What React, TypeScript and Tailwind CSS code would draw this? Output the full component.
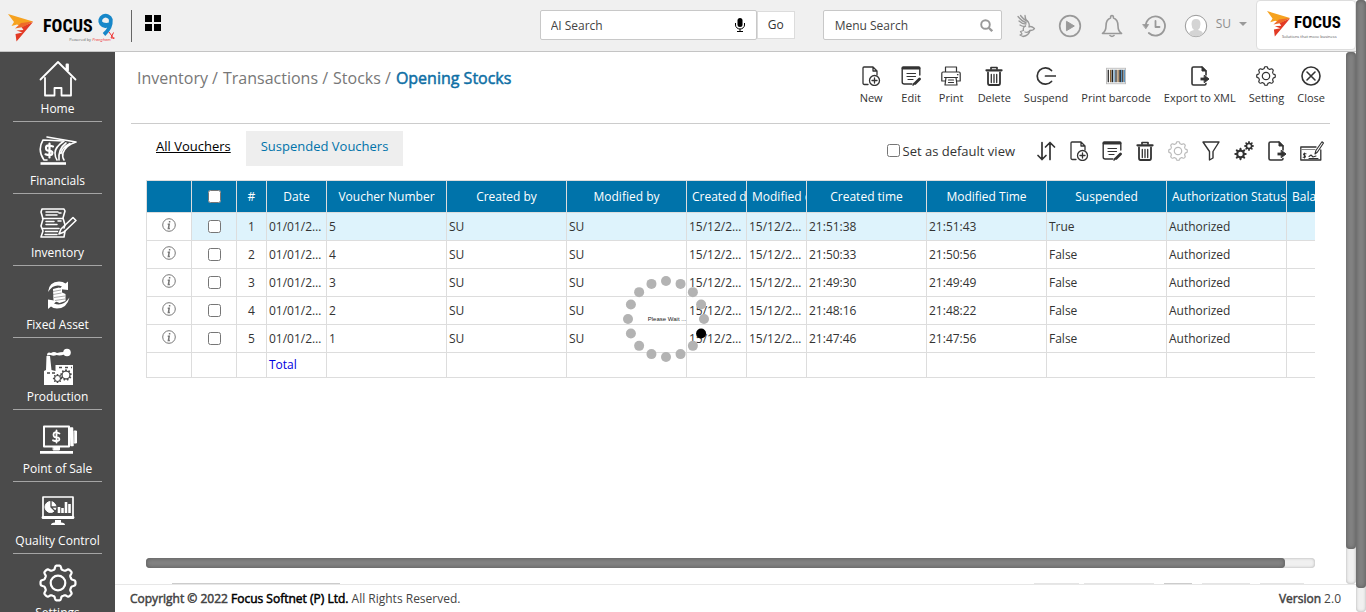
import React from "react";

type IconProps = { className?: string };

const stroke = {
  fill: "none",
  stroke: "currentColor",
  strokeLinecap: "round" as const,
  strokeLinejoin: "round" as const,
};

const gearPath = (cx: number, cy: number, outer: number, inner: number, teeth: number) => {
  const middle = (outer + inner) / 2;
  const depth = (outer - inner) / 2;
  const count = teeth * 16;
  const points = Array.from({ length: count }, (_, i) => {
    const angle = (i / count) * Math.PI * 2 - Math.PI / 2;
    const radius = middle + depth * Math.tanh(2.4 * Math.cos((i / 16) * Math.PI * 2));
    return `${(cx + Math.cos(angle) * radius).toFixed(2)} ${(cy + Math.sin(angle) * radius).toFixed(2)}`;
  });
  return `M${points.join("L")}Z`;
};

/* ---------- toolbar icons, 20 x 20 ---------- */

const NewIcon = ({ className = "size-5" }: IconProps) => (
  <svg viewBox="0 0 20 20" className={className} {...stroke} strokeWidth="1.300">
    <path d="M7 18.500H3.500Q2 18.500 2 17V2Q2 1 3 1h9l4 4v4M12 1v4h4" />
    <circle cx="13.500" cy="14.500" r="5" />
    <path d="M13.500 12v5M11 14.500h5" />
  </svg>
);

const EditIcon = ({ className = "size-5" }: IconProps) => (
  <svg viewBox="0 0 20 20" className={className} {...stroke} strokeWidth="1.400">
    <path d="M18.800 9V2q0-1-1-1H2.200q-1 0-1 1v14q0 2 2 2H11" />
    <path d="M2 2.300h16" strokeWidth="2.400" />
    <path d="M6 7.500h8.500M6 10.500h8.500M7 13.500h5" strokeWidth="1.200" />
    <path d="M14 17.500l4.500-4.500" strokeWidth="2.800" />
    <path d="M12 19.200l.8-1.600" />
  </svg>
);

const PrintIcon = ({ className = "size-5" }: IconProps) => (
  <svg viewBox="0 0 20 20" className={className} {...stroke} strokeWidth="1.200">
    <path d="M4.500 6V1h11v5M4 15H.8V7.500Q.8 6 2 6h16q1.200 0 1.200 1.500V15H16" />
    <path d="M5 11.500h10l1 7.500H4zM3.500 11.500h13M7.500 14h5M7.500 16.500h5M16.500 8.700h.5" />
  </svg>
);

const DeleteIcon = ({ className = "size-5" }: IconProps) => (
  <svg viewBox="0 0 20 20" className={className} {...stroke} strokeWidth="1.300">
    <path d="M2.500 4.300h15" strokeWidth="2.300" />
    <path d="M7 3V1.500h6V3" strokeWidth="1.700" />
    <path d="M4 6.500V17q0 2 1.500 2h9q1.500 0 1.500-2V6.500" strokeWidth="1.800" />
    <path d="M7.300 8.500v8M10 8.500v8M12.700 8.500v8" />
  </svg>
);

const SuspendIcon = ({ className = "size-5" }: IconProps) => (
  <svg viewBox="0 0 20 20" className={className} {...stroke} strokeWidth="1.700">
    <path d="M15.500 4.500A8.200 8.200 0 1 0 15.500 15.500M9.500 10h10" />
  </svg>
);

const BarcodeIcon = ({ className = "size-5" }: IconProps) => (
  <svg viewBox="0 0 22 20" className={className} fill="none">
    <rect x=".5" y="1.500" width="21" height="17" stroke="#bbb" />
    <path d="M2.500 3v14M11 3v14M18.500 3v14" stroke="#333" strokeWidth="1.500" />
    <path d="M5 3v14M13.300 3v14" stroke="#8b6333" strokeWidth="1.300" />
    <path d="M7 3v14M15.500 3v14" stroke="#222" strokeWidth="1.800" />
    <path d="M9 3v14M17 3v14M20.300 3v14" stroke="#5590bd" strokeWidth="1.100" />
  </svg>
);

const ExportIcon = ({ className = "size-5" }: IconProps) => (
  <svg viewBox="0 0 20 20" className={className} {...stroke} strokeWidth="1.600">
    <path d="M16 9V5l-4-4H3.500Q2 1 2 2.500v15Q2 19 3.500 19h11q1.500 0 1.500-1.500" />
    <path d="M12 1v4h4z" fill="currentColor" strokeWidth="1" />
    <path d="M10.500 13H15" strokeWidth="2.800" strokeLinecap="butt" />
    <path d="M14.500 9.500L19 13l-4.500 3.500z" strokeWidth="1" fill="currentColor" />
  </svg>
);

const SettingIcon = ({ className = "size-5" }: IconProps) => (
  <svg viewBox="0 0 20 20" className={className} {...stroke} strokeWidth="1.200">
    <path d={gearPath(10, 10, 9.3, 7.5, 8)} />
    <circle cx="10" cy="10" r="3.700" />
  </svg>
);

const CloseIcon = ({ className = "size-5" }: IconProps) => (
  <svg viewBox="0 0 20 20" className={className} {...stroke} strokeWidth="1.600">
    <circle cx="10" cy="10" r="9" />
    <path d="M6 6l8 8M14 6l-8 8" />
  </svg>
);

const SortIcon = ({ className = "size-5" }: IconProps) => (
  <svg viewBox="0 0 20 20" className={className} {...stroke} strokeWidth="1.700">
    <path d="M6 1.500v17M2 14.500l4 4 4-4M14 18.500v-17M9.500 6L14 1.500 18.500 6" />
  </svg>
);

const FilterIcon = ({ className = "size-5" }: IconProps) => (
  <svg viewBox="0 0 20 20" className={className} {...stroke} strokeWidth="1.400">
    <path d="M2 1h16l-6 9.500V17l-3.500 2v-8.500z" />
  </svg>
);

const GearsIcon = ({ className = "size-5" }: IconProps) => (
  <svg viewBox="0 0 20 20" className={className} {...stroke}>
    <path d={gearPath(6.5, 13, 6.2, 4.3, 8)} fill="currentColor" stroke="none" />
    <path d={gearPath(15, 5, 4.9, 3.4, 8)} fill="currentColor" stroke="none" />
    <circle cx="6.500" cy="13" r="2.300" fill="white" stroke="none" />
    <circle cx="15" cy="5" r="1.800" fill="white" stroke="none" />
  </svg>
);

const ChequeIcon = ({ className = "h-5 w-6" }: IconProps) => (
  <svg viewBox="0 0 24 20" className={className} {...stroke} strokeWidth="1.300">
    <path d="M16 6H.8v13h20V9" />
    <path d="M1 8.500h14" strokeWidth="1" stroke="#888" />
    <path d="M4.500 12v5M6 12.700H4q-1 1 .5 1.700t.5 1.900H3.200M9 15.500l2-1.500 2 2 3-1M9 17.500h9M15 13l.9-3.500L22 .8l1.500 1.200L17.500 11z" strokeWidth="1.100" />
  </svg>
);

/* ---------- sidebar icons, 40 x 40 ---------- */

const HomeArt = () => (
  <svg viewBox="0 0 40 40" className="size-10" {...stroke} strokeWidth="1.800">
    <path d="M2.500 20.500L20 3 37.500 20.500M28.500 10V5.500h1.500v6M7 19v17.500h9.500V29h7v7.500H33V19" />
  </svg>
);

const FinanceArt = () => (
  <svg viewBox="0 0 40 40" className="size-10" {...stroke} strokeWidth="1.600">
    <path d="M26 10L5 9Q-1 19 6 29h3M26 10q-9 6-9 12 0 4 2 7" />
    <path d="M9 6l29 5Q28 14 25 22q-1 4 1 7M28 12q-8 6-7 17M32 12.500q-8 4-9 10" />
    <path d="M11.500 12.500v14M15 15.500q-7-2.500-7 1.200t3.500 2.800q4 1 2.500 3.800-2 1.700-6.500 0" strokeWidth="2.200" />
    <path d="M2.500 32.500H28" strokeWidth="2.600" strokeLinecap="butt" />
  </svg>
);

const InventoryArt = () => (
  <svg viewBox="0 0 40 40" className="size-10" {...stroke} strokeWidth="1.600">
    <path d="M4 6h22l1 2-2 7 2 7-1 3M4 6l-1 3 2 7-2 7 2 5-2 6h23l1-6M4.500 15.500H25M4 25.500h17" />
    <path d="M8 9h12M8 12h11M8 18.500h8M8 21.500h11M7.500 28.500h12M7 31.500h12M20 18h3M21 10h2" strokeWidth="1.500" />
    <path d="M21 31l2-5 12-11.500 3 3L26 29z" />
  </svg>
);

const AssetArt = () => (
  <svg viewBox="0 0 40 40" className="size-10" fill="currentColor">
    <path d="M10 17Q11 6.500 21 6.500q4 0 6.500 2l2.500-2v8.500l-9-1 3-2.500Q16 8 10 17z" />
    <path d="M31.500 22.500Q29 33.500 19 33.500q-4 0-6-2L10 34v-9.500l9 1.500-3 2.500Q25 32 31.500 22.500z" />
    <path d="M15 14l6-1.500 3 1.500v3.500l3.500 1.500v7l-6 2-6-2.500z" />
    <path d="M15 16.500l8-1.500M15 19.500l8.500-1.500M16 22.500l11-1.500M17 25.500l10-1.500" stroke="#888" strokeWidth=".7" />
  </svg>
);

const ProductionArt = () => (
  <svg viewBox="0 0 40 40" className="size-10" fill="currentColor">
    <path d="M8.500 9H12l1.500 14 4 1v-6H35v20H6V24l2-1z" />
    <circle cx="29" cy="5.500" r="3.800" />
    <path d="M9 8.500q0-4 4-2.500 3-2 6 0 3-1 7-1v2.500q-4 1.500-7.500.500-3 1.500-6 0z" />
    <path d="M21 20.500h3M27 20.500h3M33 20.500h1M9 26h3M14 26h3" stroke="#4b4b4b" strokeWidth="1.300" />
    <path d={gearPath(28, 28, 5.800, 4.400, 9)} fill="#4b4b4b" />
    <circle cx="28" cy="28" r="3.300" />
    <path d={gearPath(19.5, 31.5, 4.6, 3.4, 8)} fill="#4b4b4b" />
    <circle cx="19.500" cy="31.500" r="2.400" />
  </svg>
);

const SaleArt = () => (
  <svg viewBox="0 0 40 40" className="size-10" {...stroke}>
    <path d="M6 7.500h25v20H6z" strokeWidth="2" />
    <path d="M32.500 9h2l.5 17.500h-2z" fill="currentColor" strokeWidth="1.500" />
    <path d="M36.500 12h2v12h-2z" fill="currentColor" strokeWidth="1" />
    <path d="M15.500 28h6v3h-6z" fill="currentColor" />
    <path d="M2 33.300h33" strokeWidth="2.800" strokeLinecap="butt" />
    <path d="M18.500 11.500v12M21.500 14.500q-6-2.500-6 1t3 2.400q4 1 2.500 3.400-2 1.700-6 0" strokeWidth="1.800" />
  </svg>
);

const QualityArt = () => (
  <svg viewBox="0 0 40 40" className="size-10" {...stroke}>
    <path d="M5 6h30v21H5z" strokeWidth="1.700" />
    <path d="M5 26.500h30" strokeWidth="2.800" />
    <path d="M17 29h6v2.500q4 0 4 2.500H13q0-2.500 4-2.500z" fill="currentColor" stroke="none" />
    <circle cx="12.500" cy="16" r="5.500" fill="currentColor" />
    <path d="M13 16h6M13 16l4 4M13 16V9" stroke="#4b4b4b" strokeWidth="1.300" />
    <path d="M21 22v-6M24.500 22v-5M28 22V11M31.500 22v-9" strokeWidth="2.600" strokeLinecap="butt" />
  </svg>
);

const GearArt = () => (
  <svg viewBox="0 0 40 40" className="size-10" {...stroke} strokeWidth="2.200">
    <path d={gearPath(20, 20, 17.5, 13.8, 8)} />
    <circle cx="20" cy="20" r="7.300" />
  </svg>
);

/* ---------- header drawings ---------- */

const FocusMark = ({ className }: IconProps) => (
  <svg viewBox="0 0 25 28" className={className}>
    <path d="M0 0l25 7.500L15 13 9 10.500 3.500 12 6 8z" fill="#f6a21f" />
    <path d="M25 8L8.500 27.500 7.500 20l7-1.500-6-2 7-.5-2-3z" fill="#e23a25" />
    <path d="M25 7.500L13 9l-6 5.500 8-1.500z" fill="#ee6b2a" />
  </svg>
);

const NineMark = () => (
  <svg viewBox="0 0 18 28" className="h-7 w-[18px]" fill="none">
    <path d="M12.500 12.500A5.400 5.200 0 1 1 13.800 7.500Q14.500 16 7 22.500" stroke="#1787c9" strokeWidth="3.800" />
    <path d="M3.500 10q4 3 9 1.500" stroke="#1787c9" strokeWidth="2" />
    <path d="M12 20l5 7M16.500 20.500L14 26h3.500" stroke="#e33" strokeWidth="1" />
  </svg>
);

const EagleIcon = () => (
  <svg viewBox="0 0 20 24" className="h-6 w-5" {...stroke} stroke="#999" strokeWidth="1.300">
    <path d="M2 2.500q4 5 8 6M4.500 1.500Q8 6 11 7M9 1.500q0 4 3 6M3 7q3 3 7 3M4 11q3 2 5.500 1" />
    <path d="M11 7q3 2 2 6 2-1.500 5.500 1.500-1 2-4.500 2-1 5-7 6l-3-1.500 2-1-1.500-2.500 3-1q-1-3 2-4.500" />
    <path d="M9 18q3 1 5-1.500" />
  </svg>
);

const PlayIcon = () => (
  <svg viewBox="0 0 24 24" className="size-6" {...stroke} stroke="#999" strokeWidth="1.700">
    <circle cx="12" cy="12" r="10.300" />
    <path d="M8.800 7.500l7.500 4.500-7.500 4.500z" fill="#999" strokeWidth="1" />
  </svg>
);

const BellIcon = () => (
  <svg viewBox="0 0 24 24" className="size-6" {...stroke} stroke="#999" strokeWidth="1.600">
    <path d="M2.500 19.500Q6 17 6 12 6 5.500 10.500 4q0-2.500 1.500-2.500T13.500 4Q18 5.500 18 12q0 5 3.500 7.500zM10 21.500q2 1.800 4 0" />
  </svg>
);

const HistoryIcon = () => (
  <svg viewBox="0 0 24 24" className="size-6" {...stroke} stroke="#999" strokeWidth="1.800">
    <path d="M3.800 12.500a9.600 9.600 0 1 1 3 6.500M13.500 7v6h4" />
    <path d="M1 10.500h5.600L4 14.500z" fill="#999" strokeWidth=".8" />
  </svg>
);

const AvatarIcon = () => (
  <svg viewBox="0 0 24 24" className="size-6">
    <circle cx="12" cy="12" r="10.700" fill="#fff" stroke="#999" />
    <path d="M5 20q0-3 5-4-2.500-2-2.500-6 0-5 4.500-5t4.500 5q0 4-2.500 6 5 1 5 4-7 5-14 0z" fill="#d4d4d4" />
  </svg>
);

const AppsIcon = () => (
  <svg viewBox="0 0 16 16" className="size-4">
    <path d="M0 0h7v7H0zM9 0h7v7H9zM0 9h7v7H0zM9 9h7v7H9z" />
  </svg>
);

const MicIcon = () => (
  <svg viewBox="0 0 12 16" className="h-4 w-3">
    <rect x="3.500" y="1" width="5" height="9" rx="2.500" />
    <path d="M1.500 6v2a4.500 4 0 0 0 9 0V6M6 12v2.500M3 14.500h6" fill="none" stroke="#000" strokeWidth="1" />
  </svg>
);

const MagnifierIcon = () => (
  <svg viewBox="0 0 13 13" className="size-[13px]" fill="none" stroke="#999">
    <circle cx="5.500" cy="5.500" r="4.300" strokeWidth="1.900" />
    <path d="M8.700 8.700l3.500 3.500" strokeWidth="2.300" />
  </svg>
);

/* ---------- data ---------- */

const modules = [
  { name: "Home", Art: HomeArt },
  { name: "Financials", Art: FinanceArt },
  { name: "Inventory", Art: InventoryArt },
  { name: "Fixed Asset", Art: AssetArt },
  { name: "Production", Art: ProductionArt },
  { name: "Point of Sale", Art: SaleArt },
  { name: "Quality Control", Art: QualityArt },
  { name: "Settings", Art: GearArt },
];

const actions = [
  { name: "New", Icon: NewIcon },
  { name: "Edit", Icon: EditIcon },
  { name: "Print", Icon: PrintIcon },
  { name: "Delete", Icon: DeleteIcon },
  { name: "Suspend", Icon: SuspendIcon },
  { name: "Print barcode", Icon: BarcodeIcon },
  { name: "Export to XML", Icon: ExportIcon },
  { name: "Setting", Icon: SettingIcon },
  { name: "Close", Icon: CloseIcon },
];

const viewTools = [
  { name: "Sort", Icon: SortIcon, tone: "text-[#333]" },
  { name: "Add view", Icon: NewIcon, tone: "text-[#333]" },
  { name: "Edit view", Icon: EditIcon, tone: "text-[#333]" },
  { name: "Delete view", Icon: DeleteIcon, tone: "text-[#333]" },
  { name: "View setting", Icon: SettingIcon, tone: "text-[#bbb]" },
  { name: "Filter", Icon: FilterIcon, tone: "text-[#333]" },
  { name: "Customize", Icon: GearsIcon, tone: "text-[#333]" },
  { name: "Export", Icon: ExportIcon, tone: "text-[#333]" },
  { name: "Cheque", Icon: ChequeIcon, tone: "text-[#333]" },
];

const columns = [
  { title: "Date", width: "w-[60px]" },
  { title: "Voucher Number", width: "w-[120px]" },
  { title: "Created by", width: "w-[120px]" },
  { title: "Modified by", width: "w-[120px]" },
  { title: "Created date", width: "w-[60px]" },
  { title: "Modified date", width: "w-[60px]" },
  { title: "Created time", width: "w-[120px]" },
  { title: "Modified Time", width: "w-[120px]" },
  { title: "Suspended", width: "w-[120px]" },
  { title: "Authorization Status", width: "w-[120px]" },
  { title: "Balance Amount", width: "w-[60px]" },
];

const rows = [
  ["5", "21:51:38", "21:51:43", "True"],
  ["4", "21:50:33", "21:50:56", "False"],
  ["3", "21:49:30", "21:49:49", "False"],
  ["2", "21:48:16", "21:48:22", "False"],
  ["1", "21:47:46", "21:47:56", "False"],
].map(([voucher, created, modified, suspended]) => [
  "01/01/2022",
  voucher,
  "SU",
  "SU",
  "15/12/2022",
  "15/12/2022",
  created,
  modified,
  suspended,
  "Authorized",
  "",
]);

/* ---------- sections ---------- */

const brandFont = "font-['Roboto_Condensed','Liberation_Sans_Narrow','Roboto',sans-serif] font-bold text-black";
const heavy = "font-normal [-webkit-text-stroke:0.5px_currentColor]";

function Header() {
  return (
    <header className="flex h-[52px] shrink-0 items-start border-b border-[#c4c4c4] bg-[#f0f0f0]">
      <div className="mr-auto flex items-start pl-2">
        <FocusMark className="mt-3.5 h-7 w-[25px]" />
        <div className="relative ml-2.5 mt-3 flex items-start gap-1">
          <span className={`${brandFont} text-[18px] leading-7`}>FOCUS</span>
          <NineMark />
          <span className="absolute right-1 top-[26px] whitespace-nowrap text-[4px] leading-[4px] text-[#666]">
            Powered by <i className="text-[#e33]">Prangham</i>
          </span>
        </div>
        <div className="ml-4 mt-2.5 h-8 w-px bg-[#666]" />
        <button aria-label="Apps" className="ml-[13px] mt-[15px]">
          <AppsIcon />
        </button>
      </div>

      <form className="mt-2.5 flex items-center" onSubmit={(e) => e.preventDefault()}>
        <div className="flex h-[30px] w-[217px] items-center rounded-xs border border-[#c8c8c8] bg-white pl-2.5 pr-2.5">
          <input
            aria-label="AI Search"
            placeholder="AI Search"
            className="min-w-0 flex-1 bg-transparent pt-0.5 text-[12px] text-[#444] outline-none placeholder:text-[#444]"
          />
          <MicIcon />
        </div>
        <button className="h-7 w-[38px] border border-[#dcdcdc] bg-white text-[12px] text-[#333]">Go</button>
      </form>

      <div className="ml-7 mt-2.5 flex h-[30px] w-[179px] items-center rounded-xs border border-[#c8c8c8] bg-white pl-[11px] pr-2">
        <input
          aria-label="Menu Search"
          placeholder="Menu Search"
          className="min-w-0 flex-1 bg-transparent pt-0.5 text-[12px] text-[#444] outline-none placeholder:text-[#444]"
        />
        <MagnifierIcon />
      </div>

      <div className="ml-3.5 mt-3.5 flex items-start gap-[18px]">
        <button aria-label="Assistant" className="mr-1"><EagleIcon /></button>
        <button aria-label="Play"><PlayIcon /></button>
        <button aria-label="Notifications"><BellIcon /></button>
        <button aria-label="History"><HistoryIcon /></button>
        <button className="flex items-start text-[12px] leading-5 text-[#8d8d8d]">
          <AvatarIcon />
          <span className="ml-2">SU</span>
          <svg viewBox="0 0 8 4" className="ml-2 mt-2 h-1 w-2" fill="#999">
            <path d="M0 0h8L4 4z" />
          </svg>
        </button>
      </div>

      <div className="ml-[9px] flex h-[50px] w-[100px] rounded-sm border border-[#ddd] bg-white pl-2.5">
        <FocusMark className="mt-2.5 h-[26px] w-[23px]" />
        <div className="mt-2 pl-1">
          <div className={`${brandFont} text-[17px] leading-[26px]`}>FOCUS</div>
          <div className="-ml-3 whitespace-nowrap text-[4px] leading-[4px] text-[#555]">Solutions that move business</div>
        </div>
      </div>
    </header>
  );
}

function Sidebar() {
  return (
    <nav className="flex w-[115px] shrink-0 flex-col gap-[9px] overflow-hidden bg-[#4b4b4b] px-[13px] pt-[7px]">
      {modules.map(({ name, Art }) => (
        <a
          key={name}
          href="#"
          className="flex shrink-0 flex-col items-center whitespace-nowrap border-b border-[#a5a5a5] pb-0.5 text-[12px] leading-5 text-white"
        >
          <Art />
          {name}
        </a>
      ))}
    </nav>
  );
}

function VoucherTable() {
  const cell = "overflow-hidden text-ellipsis whitespace-nowrap border border-[#ddd] px-0.5";
  return (
    <div className="overflow-hidden">
      <table className="w-[1200px] table-fixed border-collapse text-[12px] text-[#333]">
        <thead>
          <tr className="h-8 bg-[#0073aa] text-white">
            <th className="w-[45px] border border-[#ddd]" aria-label="Information" />
            <th className="w-[45px] border border-[#ddd]">
              <input type="checkbox" aria-label="Select all" className="mx-auto block size-[13px]" />
            </th>
            <th className="w-[30px] border border-[#ddd] font-normal">#</th>
            {columns.map((c) => (
              <th
                key={c.title}
                className={`${c.width} overflow-hidden whitespace-nowrap border border-[#ddd] px-[5px] font-normal`}
              >
                {c.title}
              </th>
            ))}
          </tr>
        </thead>
        <tbody>
          {rows.map((row, r) => (
            <tr key={r} className={r === 0 ? "h-7 bg-[#def3fc]" : "h-7"}>
              <td className={`${cell} bg-white`}>
                <button aria-label="Voucher information" className="mx-auto mb-1 block">
                  <svg viewBox="0 0 14 14" className="size-3.5" fill="none" stroke="#777">
                    <circle cx="7" cy="7" r="6.300" />
                    <path d="M7.600 3v1.500M5.700 6.200h1.500l-.8 4.300h1.500" strokeWidth="1.500" />
                  </svg>
                </button>
              </td>
              <td className={cell}>
                <input type="checkbox" aria-label={`Select voucher ${row[1]}`} className="mx-auto block size-[13px]" />
              </td>
              <td className={`${cell} text-center`}>{r + 1}</td>
              {row.map((value, i) => (
                <td key={i} className={cell}>{value}</td>
              ))}
            </tr>
          ))}
          <tr className="h-[25px]">
            <td className={cell} />
            <td className={cell} />
            <td className={cell} />
            <td className={`${cell} text-[#0000e0]`}>Total</td>
            {columns.slice(1).map((c) => (
              <td key={c.title} className={cell} />
            ))}
          </tr>
        </tbody>
      </table>
    </div>
  );
}

function Spinner() {
  return (
    <svg
      viewBox="0 0 90 90"
      role="status"
      className="absolute left-[calc(50%-110px)] top-[222px] size-[90px]"
    >
      {Array.from({ length: 16 }, (_, i) => {
        const angle = (i * Math.PI) / 8;
        return (
          <circle
            key={i}
            cx={45 + 38 * Math.cos(angle)}
            cy={45 + 38 * Math.sin(angle)}
            r="5"
            fill={i === 1 ? "#000" : "#b3b3b3"}
          />
        );
      })}
      <text x="46" y="47" textAnchor="middle" className="font-['Liberation_Sans',sans-serif] text-[6px]" fill="#222">
        Please Wait ...
      </text>
    </svg>
  );
}

const trackStyle = "bg-[#f0f0f0] shadow-[inset_0_0_3px_#aaa] rounded-sm";
const thumbStyle = "bg-[#828282] shadow-[inset_0_0_4px_#555] rounded-sm";

function Content() {
  return (
    <main className="relative flex min-h-0 min-w-0 flex-1 flex-col overflow-hidden">
      <div className="mx-4 flex h-[72px] shrink-0 items-start justify-between border-b border-[#ccc] pl-[6px] pr-[5px] pt-3">
        <div className="mt-0.5 flex gap-[5px] whitespace-nowrap text-[16px] leading-6 text-[#777]">
          <a href="#">Inventory /</a>
          <a href="#">Transactions /</a>
          <a href="#">Stocks /</a>
          <a href="#" className={`${heavy} text-[#0e6fa5]`}>Opening Stocks</a>
        </div>
        <div className="flex gap-[13px] text-[11px] leading-4 text-[#333]">
          {actions.map(({ name, Icon }) => (
            <button key={name} className="flex min-w-[27px] flex-col items-center gap-1 whitespace-nowrap pt-0.5">
              <Icon />
              {name}
            </button>
          ))}
        </div>
      </div>

      <div className="mx-[31px] mt-[7px] flex shrink-0 items-center">
        <button className="px-2.5 pb-1.5 text-[13px] leading-5 text-black underline">All Vouchers</button>
        <button className="ml-[5px] h-[35px] bg-[#eee] px-[15px] pb-1.5 text-[13px] leading-5 text-[#0073aa]">
          Suspended Vouchers
        </button>
        <label className="ml-auto flex items-center gap-[3px] pt-1 text-[13px] leading-5 text-[#333]">
          <input type="checkbox" className="size-[13px]" />
          Set as default view
        </label>
        <div className="-mr-[9px] ml-[21px] flex items-center gap-[13px] pt-1">
          {viewTools.map(({ name, Icon, tone }) => (
            <button key={name} aria-label={name} className={tone}>
              <Icon />
            </button>
          ))}
        </div>
      </div>

      <div className="mx-[31px] mt-3.5">
        <VoucherTable />
      </div>

      <div className={`mx-[31px] mt-auto h-2.5 shrink-0 ${trackStyle}`}>
        <div className={`h-full w-[97.4%] ${thumbStyle}`} />
      </div>
      <div className="mx-[57px] mt-[15px] flex h-px shrink-0">
        <div className="mr-auto w-[168px] bg-[#ccc]" />
        <div className="mr-[5px] w-[45px] bg-[#e5e5e5]" />
        <div className="mr-2.5 w-[70px] bg-[#e5e5e5]" />
        <div className="mr-2.5 w-7 bg-[#ccc]" />
        <div className="mr-2.5 w-12 bg-[#e5e5e5]" />
        <div className="-mr-[15px] w-[44px] bg-[#e5e5e5]" />
      </div>
      <Spinner />
    </main>
  );
}

export default function App() {
  return (
    <div className="flex h-screen overflow-hidden bg-white font-['Open_Sans',sans-serif]">
      <div className="flex min-w-0 flex-1 flex-col">
        <Header />
        <div className="flex min-h-0 flex-1">
          <Sidebar />
          <div className="flex min-w-0 flex-1 flex-col">
            <div className="flex min-h-0 flex-1">
              <Content />
              <div className={`w-2.5 ${trackStyle}`}>
                <div className={`h-[93.5%] ${thumbStyle}`} />
              </div>
            </div>
            <footer className="flex h-7 shrink-0 items-center justify-between border-t border-[#e7e7e7] px-[15px] text-[12px] text-[#444]">
              <span>
                <b className={heavy}>Copyright © 2022 <span className="text-black">Focus Softnet (P) Ltd.</span></b> All Rights Reserved.
              </span>
              <span>
                <b className={heavy}>Version</b> 2.0
              </span>
            </footer>
          </div>
        </div>
      </div>
      <div className={`w-2.5 shrink-0 ${trackStyle}`}>
        <div className={`h-[96%] ${thumbStyle}`} />
      </div>
    </div>
  );
}
